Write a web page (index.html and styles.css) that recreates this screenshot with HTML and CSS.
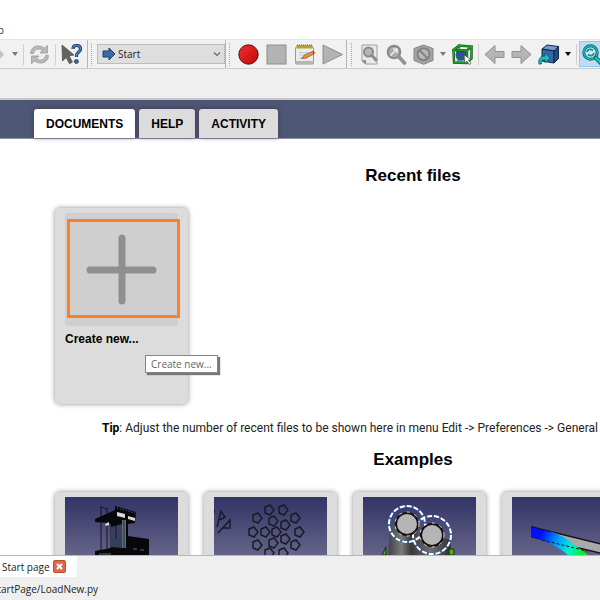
FILE: index.html
```
<!DOCTYPE html>
<html lang="en">
<head>
  <meta charset="UTF-8">
  <title>Start page</title>
  <meta name="viewport" content="width=device-width, initial-scale=1.0">
  <link rel="stylesheet" href="styles.css">
</head>
<body>
  <div class="app">
    <nav class="menubar"><a href="#">Help</a></nav>

    <div class="toolbars">
      <div class="toolbar nav-tools">
        <button class="tool" aria-label="Redo">
          <svg viewBox="0 0 21 21"><path d="M2 6h9V2l8 8.500-8 8.500v-4H2z" fill="#c0c0c0"/></svg>
        </button>
        <button class="caret" aria-label="Redo list"></button>
        <span class="sep"></span>
        <button class="tool" aria-label="Refresh">
          <svg viewBox="0 0 21 21"><path d="M1.500 9.500C2 4.500 5 2 9 2c3 0 4.800.8 6.200 2.200L18.500 1.500v7.500H11l2.300-2.500C12 5.300 10.800 5 9.500 5 7 5 5 6.500 4.500 9.500z" fill="#b9b9b9" stroke="#9a9a9a" stroke-width=".8"/><path d="M19.500 11.500C19 16.500 16 19 12 19c-3 0-4.800-.8-6.200-2.200L2.500 19.500V12H10l-2.300 2.500C9 15.700 10.200 16 11.500 16c2.500 0 4.500-1.500 5-4.500z" fill="#b9b9b9" stroke="#9a9a9a" stroke-width=".8"/></svg>
        </button>
        <span class="sep"></span>
        <button class="tool" aria-label="What's this?">
          <svg viewBox="0 0 21 21"><path d="M1 1l12 10-5 .8 3.500 6.200-3 1.700L5.200 13.500 1.500 17z" fill="#62645f" stroke="#50524d" stroke-width=".8"/><path d="M12 5c0-2.600 1.700-3.500 3.700-3.500 2.400 0 3.800 1.300 3.800 3.500 0 3.200-4 3.300-4 6.500v1.500" fill="none" stroke="#1b3b66" stroke-width="3.200"/><path d="M12 5c0-2.600 1.700-3.500 3.700-3.500 2.400 0 3.800 1.300 3.800 3.500 0 3.200-4 3.300-4 6.500v1.500" fill="none" stroke="#5583b8" stroke-width="1.400"/><circle cx="15.400" cy="17.500" r="2" fill="#3d6ba0" stroke="#1b3b66" stroke-width=".8"/></svg>
        </button>
      </div>

      <div class="toolbar workbench">
        <span class="handle"></span>
        <div class="combo">
          <svg class="combo-icon" viewBox="0 0 14 14"><path d="M1 4h6V1l6 6-6 6v-3H1z" fill="#3b6ca8" stroke="#1c3d68"/></svg>
          <select aria-label="Workbench"><option>Start</option></select>
          <svg class="combo-arrow" viewBox="0 0 8 8"><path d="M1 2.500l3 3 3-3" fill="none" stroke="#666" stroke-width="1.200"/></svg>
        </div>
      </div>

      <div class="toolbar macro">
        <span class="handle"></span>
        <button class="tool" aria-label="Record macro">
          <svg viewBox="0 0 21 21"><defs><linearGradient id="red" x2="1" y2="1"><stop stop-color="#f03030"/><stop offset="1" stop-color="#c00808"/></linearGradient></defs><circle cx="10.500" cy="10.500" r="9.700" fill="url(#red)" stroke="#4a1111"/></svg>
        </button>
        <button class="tool" aria-label="Stop">
          <svg viewBox="0 0 21 21"><rect x="1" y="1" width="19" height="19" fill="#b3b3b3" stroke="#8e8e8e"/></svg>
        </button>
        <button class="tool" aria-label="Macros">
          <svg viewBox="0 0 21 21"><rect x="1.500" y="3" width="18" height="17" rx="1" fill="#ececec" stroke="#989898"/><path d="M1.500 17h18v3h-18z" fill="#b5b5b2"/><path d="M2.500 1h16v3.500h-16z" fill="#b9a032"/><path d="M3 1h16" stroke="#7d6b17" stroke-dasharray="1 1"/><path d="M5 8.500h9M5 11h6M5 14h5" stroke="#c5c5c5"/><path d="M7.500 14.500l3-3.500 8-3.500 1.700 2.300-8 4.200z" fill="#e8983a" stroke="#89531b" stroke-width=".8"/><path d="M18 7.500l2-.6 1 2-1.600 1z" fill="#d33"/></svg>
        </button>
        <button class="tool" aria-label="Run macro">
          <svg viewBox="0 0 21 21"><path d="M1 1l19.500 9.500L1 20z" fill="#b3b3b3" stroke="#8e8e8e"/></svg>
        </button>
      </div>

      <div class="toolbar view-tools">
        <span class="handle"></span>
        <button class="tool" aria-label="Fit all">
          <svg viewBox="0 0 21 21"><path d="M3 1h15v19H6l-3-3z" fill="#e9e9e9" stroke="#a0a0a0"/><path d="M3 16l4 .5V20z" fill="#777"/><circle cx="9.500" cy="8" r="4.500" fill="#b4b4b4" stroke="#8a8a8a" stroke-width="2"/><path d="M13 11.500l4 4.500" stroke="#8a8a8a" stroke-width="3" stroke-linecap="round"/></svg>
        </button>
        <button class="tool" aria-label="Fit selection">
          <svg viewBox="0 0 21 21"><circle cx="8" cy="8" r="6.300" fill="#aaa" stroke="#888" stroke-width="2"/><path d="M13 13l5.500 6" stroke="#929292" stroke-width="3.600" stroke-linecap="round"/><path d="M4.500 11.500L10 6M7 5h4v4" fill="none" stroke="#eee" stroke-width="1.500"/></svg>
        </button>
        <button class="tool" aria-label="Draw style">
          <svg viewBox="0 0 21 21"><path d="M10.500 1l9.500 3.500v12l-9.500 3.800L1 16.500v-12z" fill="#a4a4a4" stroke="#858585"/><circle cx="10.500" cy="10.300" r="6" fill="#b8b8b8" stroke="#808080" stroke-width="2"/><path d="M6.500 6.200l8 8.200" stroke="#808080" stroke-width="2"/></svg>
        </button>
        <button class="caret" aria-label="Draw style list"></button>
        <button class="tool" aria-label="Bounding box">
          <svg viewBox="0 0 21 21"><path d="M4 7l10-1 1 11-10 1z" fill="#8b9cb2"/><circle cx="9" cy="11" r="5.500" fill="#2c5690"/><path d="M1.500 6L7 1.500l12.500 1-4.500 4zM15 6.500V19M1.500 6l.5 12.500L15 19l4.500-4.500v-12M7 1.500v3" fill="none" stroke="#074f0c" stroke-width="2.400"/><path d="M1.500 6L7 1.500l12.500 1-4.500 4zM15 6.500V19M1.500 6l.5 12.500L15 19l4.500-4.500v-12M7 1.500v3" fill="none" stroke="#1fa32b" stroke-width="1.300"/><path d="M12 11l7.500 4.500-3 .6 2.500 3.200-1.800 1.200-2.200-3.300-2 2z" fill="#fff" stroke="#444" stroke-width=".7"/></svg>
        </button>
        <span class="sep"></span>
        <button class="tool" aria-label="Back">
          <svg viewBox="0 0 21 21"><path d="M20 7.500h-9v-6L1 10.500l10 9v-6h9z" fill="#b5b5b5" stroke="#929292"/></svg>
        </button>
        <button class="tool" aria-label="Forward">
          <svg viewBox="0 0 21 21"><path d="M1 7.500h9v-6l10 9-10 9v-6H1z" fill="#b5b5b5" stroke="#929292"/></svg>
        </button>
        <button class="tool" aria-label="Linked object">
          <svg viewBox="0 0 21 21"><path d="M4 5l5-4 11.500 1.500L16 7z" fill="#6f9bd2" stroke="#122643"/><path d="M4 5l12 2v12L4 17z" fill="#3567a8" stroke="#122643"/><path d="M16 7l4.500-4.500v12L16 19z" fill="#244b82" stroke="#122643"/><path d="M1 20c-1-5 1.500-8 6-8V9l5 5-5 4.800v-3C4 15.500 2.500 17 3.500 20z" fill="#16c0c6" stroke="#07585d" stroke-width=".8"/></svg>
        </button>
        <button class="caret dark" aria-label="Linked object list"></button>
        <span class="sep"></span>
        <button class="tool active" aria-label="Sync view">
          <svg viewBox="0 0 21 21"><circle cx="8.500" cy="8.500" r="6.700" fill="#c5eef0" stroke="#0b5d63" stroke-width="3"/><circle cx="8.500" cy="8.500" r="6.700" fill="none" stroke="#19b5bd" stroke-width="1.600"/><path d="M14 14l5.500 5.500" stroke="#0b5d63" stroke-width="4.400" stroke-linecap="round"/><path d="M14 14l5.500 5.500" stroke="#19c3ca" stroke-width="2.600" stroke-linecap="round"/><path d="M5 8c.5-3 4-3.500 6-1.500M12 9c-.5 3-4 3.500-6 1.500" fill="none" stroke="#178c92" stroke-width="1.800"/></svg>
        </button>
      </div>
    </div>
    <div class="toolbar-row"></div>

    <main class="view">
      <div class="page">
        <header class="page-tabs">
          <button class="page-tab selected">DOCUMENTS</button>
          <button class="page-tab">HELP</button>
          <button class="page-tab">ACTIVITY</button>
        </header>

        <h2>Recent files</h2>
        <div class="cards">
          <a class="card" href="#">
            <div class="thumb create">
              <svg viewBox="0 0 113 113"><path d="M57 25v63M25 57h63" stroke="#8f8f8f" stroke-width="7" stroke-linecap="round"/></svg>
              <span class="highlight"></span>
            </div>
            <h4>Create new...</h4>
            <span class="tooltip">Create new...</span>
          </a>
        </div>
        <p class="tip"><b>Tip</b>: Adjust the number of recent files to be shown here in menu Edit -&gt; Preferences -&gt; General -&gt; Size of recent file list</p>

        <h2>Examples</h2>
        <div class="cards">
          <a class="card" href="#" aria-label="Crane example">
            <div class="thumb scene">
              <svg viewBox="0 0 113 113">
                <path d="M36 9v44M42 11v42M46 28v24M36 10l6 2M51 28v12" stroke="#15151f" fill="none"/>
                <path d="M30 22l20-9V9l21 6-1 11-7 1v12l21 3v71H30V54l16-3V28l-2-2-14-1z" fill="#08080c"/>
                <path d="M46 30l11-3v16H46z" fill="#3d3d63"/><path d="M51 28v14" stroke="#15151f"/>
                <path d="M46 42l11 1v8l-11-1z" fill="#2e4158"/>
                <path d="M57 23h4v28h-4z" fill="#5f6d7b"/><path d="M59 23v28" stroke="#273039"/>
                <path d="M52 15l8 2v4l-8-2zM63 19l7 2v3l-7-2zM40 27l4-2v3l-3 1z" fill="#d9d9d9"/>
                <path d="M52 11l18 5" stroke="#777" stroke-dasharray="1 2"/>
                <path d="M68 52h4M75 53h4M34 57h12" stroke="#596a61"/>
              </svg>
            </div>
          </a>
          <a class="card" href="#" aria-label="Sketch pattern example">
            <div class="thumb scene">
              <svg viewBox="0 0 113 113">
                <defs><path id="pent" d="M-4-3L1-5 5 0 1 5-4 3z" fill="none" stroke="#191b24" stroke-width="1.500"/></defs>
                <use href="#pent" x="55" y="13"/><use href="#pent" x="69" y="13"/>
                <use href="#pent" x="43" y="21"/><use href="#pent" x="81" y="21"/>
                <use href="#pent" x="59" y="24"/><use href="#pent" x="71" y="28"/>
                <use href="#pent" x="39" y="35"/><use href="#pent" x="51" y="35"/>
                <use href="#pent" x="62" y="35"/><use href="#pent" x="85" y="35"/>
                <use href="#pent" x="59" y="46"/><use href="#pent" x="71" y="42"/>
                <use href="#pent" x="43" y="48"/><use href="#pent" x="81" y="48"/>
                <use href="#pent" x="55" y="56"/><use href="#pent" x="69" y="56"/>
                <path d="M0 12v4M3 30l4-16 4 6-5 3M4 36l12-13v8H9" fill="none" stroke="#191b24" stroke-width="1.500"/>
              </svg>
            </div>
          </a>
          <a class="card" href="#" aria-label="Cylinder example">
            <div class="thumb scene">
              <svg viewBox="0 0 113 113">
                <defs><linearGradient id="metal"><stop stop-color="#353535"/><stop offset=".25" stop-color="#7a7a7a"/><stop offset=".4" stop-color="#393939"/><stop offset=".7" stop-color="#707070"/><stop offset="1" stop-color="#2e2e2e"/></linearGradient></defs>
                <path d="M27 28l-5 85h64l2-70z" fill="url(#metal)"/>
                <path d="M19 58l4-8v8zM86 52h5v6h-5z" fill="#4fae18" stroke="#1b2c0d"/>
                <g fill="none" stroke="#2962b5" stroke-width="2"><circle cx="44" cy="27" r="18"/><circle cx="69" cy="38" r="19"/></g>
                <g fill="none" stroke="#fff" stroke-width="2" stroke-dasharray="5 2"><circle cx="44" cy="27" r="18"/><circle cx="69" cy="38" r="19"/></g>
                <g fill="#b5b5b5" stroke="#111" stroke-width="2"><circle cx="44" cy="27" r="11"/><circle cx="69" cy="38" r="11"/></g>
                <g fill="none" stroke="#ddd" stroke-dasharray="3 5"><circle cx="44" cy="27" r="12"/><circle cx="69" cy="38" r="12"/></g>
              </svg>
            </div>
          </a>
          <a class="card" href="#" aria-label="Stress analysis example">
            <div class="thumb scene">
              <svg viewBox="0 0 113 113">
                <defs><linearGradient id="stress" gradientUnits="userSpaceOnUse" x1="20" y1="35" x2="78" y2="62"><stop offset=".15" stop-color="#0010ff"/><stop offset=".42" stop-color="#00a0ff"/><stop offset=".65" stop-color="#00f0d0"/><stop offset=".85" stop-color="#00f030"/><stop offset="1" stop-color="#70f000"/></linearGradient></defs>
                <path d="M20 30l93 23v9L20 40z" fill="#a9a9a9" stroke="#15151a" stroke-width="1.500"/>
                <path d="M20 30l20 5c13 4 25 14 39 26l-22-2C46 50 38 45 20 40z" fill="url(#stress)"/>
                <path d="M20 30l20 5M30 43l45 11" stroke="#15151a" stroke-dasharray="3 2"/>
              </svg>
            </div>
          </a>
        </div>
      </div>
    </main>

    <footer class="bottom">
      <div class="doc-tab">
        <span>Start page</span>
        <button class="close" aria-label="Close tab">
          <svg viewBox="0 0 11 11"><path d="M3 3l5 5M8 3l-5 5" stroke="#fff" stroke-width="2"/></svg>
        </button>
      </div>
      <div class="status"><span>StartPage/LoadNew.py</span></div>
    </footer>
  </div>
</body>
</html>
```
FILE: styles.css
```
* { box-sizing: border-box; }
body { margin: 0; font-family: 'Open Sans', 'Noto Sans', sans-serif; font-size: 10px; color: #222; background: #fff; }
button { border: none; background: none; padding: 0; font: inherit; color: inherit; }
a { color: inherit; text-decoration: none; }
svg { display: block; }
.app { display: flex; flex-direction: column; height: 100vh; overflow: hidden; }

/* menu and toolbars */
.menubar {
  display: flex; justify-content: flex-end; align-items: flex-end;
  width: 4px; height: 39px; padding-bottom: 2px; line-height: 14px; color: #1d2c50;
}
.toolbars { display: flex; height: 30px; background: #f1f1f1; border-top: 1px solid #e4e4e4; border-bottom: 1px solid #cdcdcd; overflow: hidden; }
.toolbar { display: flex; align-items: center; flex-shrink: 0; border-right: 1px solid #b5b5b5; }
.nav-tools { margin-left: -18px; padding-right: 2px; }
.macro { gap: 1px; }
.view-tools { padding-left: 1px; border-right: none; }
.tool { display: flex; align-items: center; justify-content: center; width: 27px; height: 26px; flex-shrink: 0; }
.tool svg { width: 21px; height: 21px; }
.tool.active { background: #c0dcf3; border: 1px solid #90c8f6; }
.caret { display: flex; justify-content: center; width: 12px; color: #777; }
.caret::before { content: ""; border: 3px solid transparent; border-top: 4px solid; border-bottom: none; }
.caret.dark { color: #000; }
.sep { width: 1px; height: 21px; margin: 0 2px; background: #d0d0d0; }
.handle { width: 2px; height: 23px; margin: 0 3px; border-left: 1px dotted #a5a5a5; }
.combo { position: relative; width: 128px; height: 20px; margin-left: 1px; }
.combo select {
  appearance: none; width: 100%; height: 100%; padding: 0 16px 0 20px;
  font: inherit; color: #222; background: #dedede; border: 1px solid #bdbdbd; border-radius: 0;
}
.combo svg { position: absolute; pointer-events: none; }
.combo-icon { width: 14px; height: 14px; left: 5px; top: 3px; }
.combo-arrow { width: 8px; height: 8px; right: 4px; top: 6px; }
.toolbar-row { height: 31px; background: #efefef; border-bottom: 2px solid #c6c6c6; }

/* start page, wider than the window */
.view { flex: 1; min-height: 0; overflow: hidden; background: #fff; }
.page { margin-right: -226px; font-family: 'Liberation Sans', Arial, sans-serif; font-size: 12px; color: #000; }
.page-tabs { display: flex; align-items: flex-end; gap: 4px; height: 39px; padding-left: 34px; background: #4d5776; border-bottom: 1px solid #8d92a5; }
.page-tab {
  height: 29px; padding: 0 12px; font-weight: bold; background: #dcdcdc;
  border-radius: 3px 3px 0 0; box-shadow: 0 -1px 5px #443f50;
}
.page-tab.selected { background: #fff; }
h2 { margin: 27px 0 22px; font-size: 17px; line-height: 20px; text-align: center; }
.cards { display: flex; gap: 16px; padding-left: 55px; }
.card {
  position: relative; width: 133px; height: 196px; padding: 5px 10px;
  background: #dcdcdc; border-radius: 5px; box-shadow: 0 0 5px #8c8c8c;
}
.thumb { position: relative; height: 113px; }
.create { background: #cfcfcf; border-radius: 3px; }
.scene { background: linear-gradient(#333366, #9393aa); }
.highlight { position: absolute; left: 2px; top: 6px; width: 113px; height: 99px; border: 3px solid #ff7f27; }
h4 { margin: 5px 0 0; font-size: 12px; line-height: 16px; }
.tooltip {
  position: absolute; left: 90px; top: 147px; height: 18px; padding: 0 5px;
  font-family: 'Open Sans', 'Noto Sans', sans-serif; font-size: 10px; line-height: 17px; white-space: nowrap;
  color: #666; background: #fff; border: 1px solid #868686; box-shadow: 2px 2px 1px #777;
}
.tip { margin: 16px 0 0; font-family: Roboto, Arial, sans-serif; line-height: 16px; text-align: center; color: #222; white-space: nowrap; }
.tip b { color: #000; }
.tip + h2 { margin-top: 14px; }

/* document tab and status bar */
.bottom { height: 45px; background: #efefef; border-top: 1px solid #b8b8b8; }
.doc-tab { display: inline-flex; align-items: center; gap: 3px; height: 21px; padding: 0 11px 0 2px; background: #fff; }
.close { width: 13px; height: 13px; background: #dd6b4f; border: 1px solid #c4492f; border-radius: 2px; }
.status { display: flex; align-items: center; height: 24px; margin-left: -8px; }
```
